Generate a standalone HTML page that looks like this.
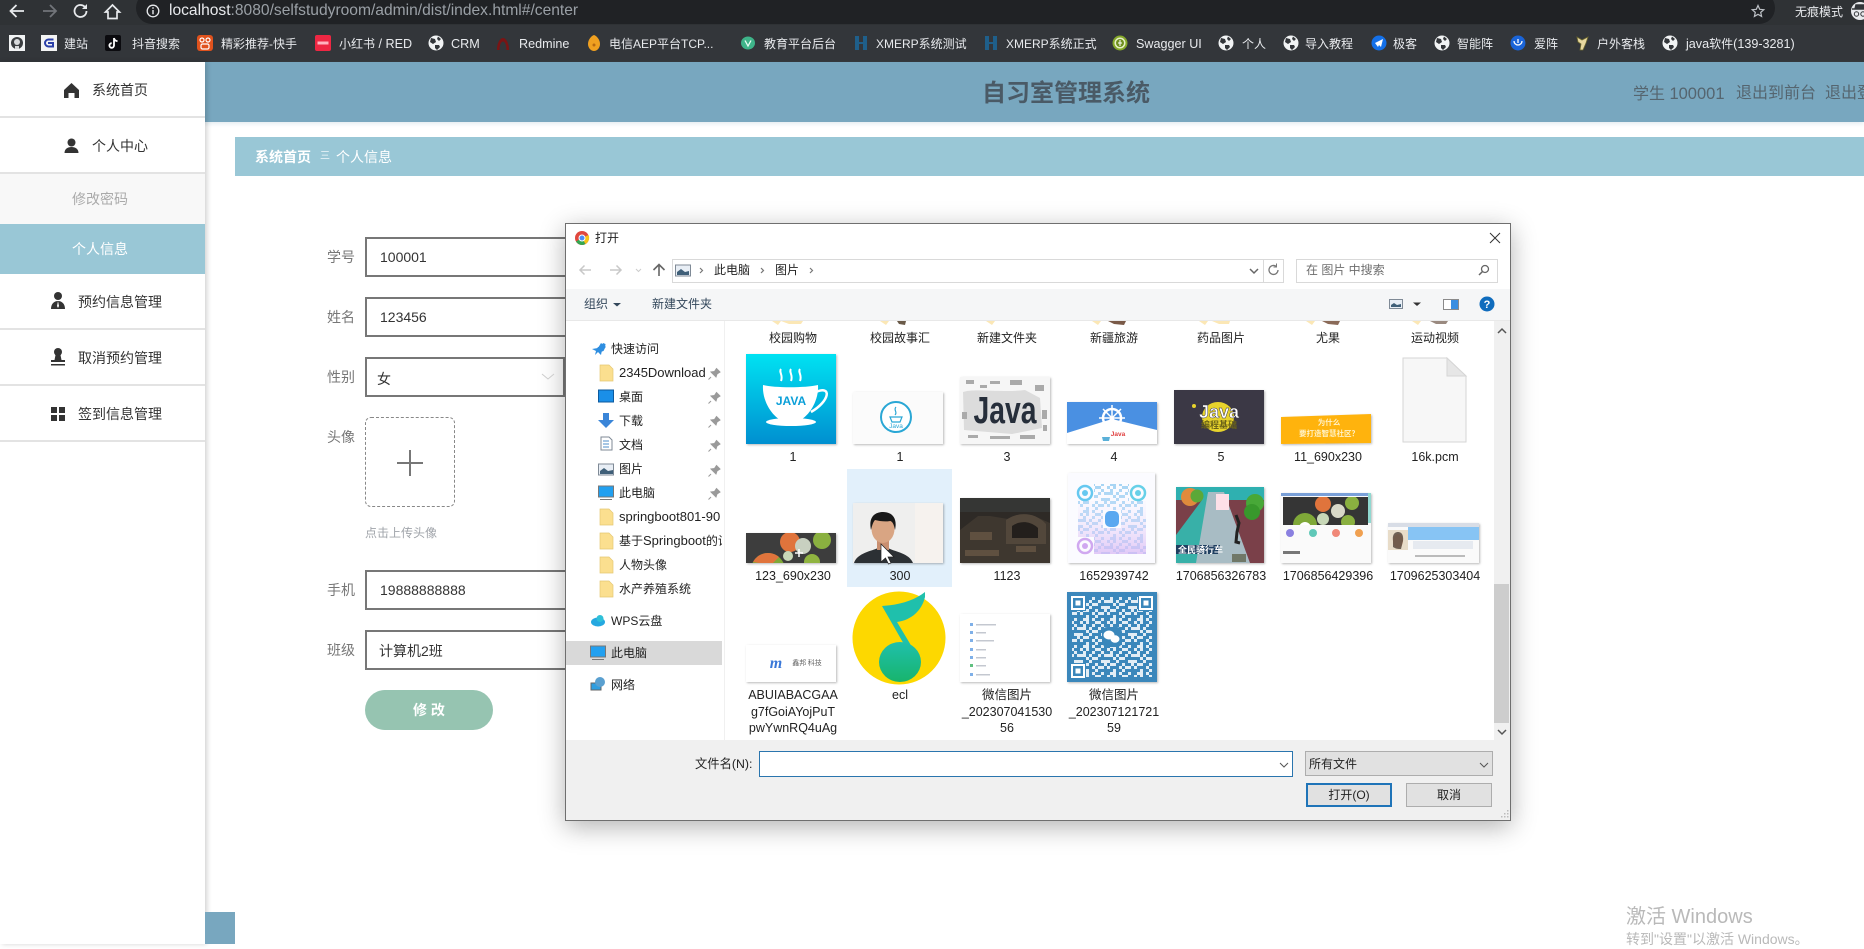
<!DOCTYPE html>
<html lang="zh-CN">
<head>
<meta charset="utf-8">
<title>自习室管理系统</title>
<style>
html,body{margin:0;padding:0;width:1864px;height:944px;overflow:hidden;background:#fff;font-family:"Liberation Sans","Noto Sans CJK SC",sans-serif}
div,span{box-sizing:border-box}
.a{position:absolute}
.t{position:absolute;white-space:nowrap;line-height:20px;height:20px}
.bm{position:absolute;top:34px;font-size:12px;line-height:20px;height:20px;color:#e8eaed;white-space:nowrap}
.bm.en{font-size:12.6px}
.side{left:0;width:205px;background:#fff;border-bottom:2px solid #e3e3e3}
.st{font-size:14px;color:#333}
.lab{font-size:14px;color:#777}
.inp{position:absolute;left:365px;width:220px;height:40px;border:2px solid #777;background:#fff;font-size:14px;color:#333;line-height:36px;padding-left:13px}
.n{position:absolute;left:619px;font-size:12px;color:#222;line-height:18px;height:18px;white-space:nowrap;overflow:hidden;max-width:103px}
.n.en{font-size:13px}
.n.top{left:611px}
.l{position:absolute;width:108px;margin-left:-54px;text-align:center;font-size:12.5px;color:#222;line-height:16.7px;word-break:break-all}
.d{font-size:12px;color:#222}
</style>
</head>
<body>

<!-- browser chrome -->
<div class="a" style="left:0;top:0;width:1864px;height:25px;background:#2f3235"></div>
<div class="a" style="left:136px;top:-8px;width:1639px;height:32px;background:#202225;border-radius:16px"></div>
<div class="a" style="left:0;top:25px;width:1864px;height:37px;background:#33363a"></div>
<div class="t" style="left:169px;top:1px;font-size:15.6px;color:#9aa0a6"><span style="color:#e8eaed">localhost</span>:8080/selfstudyroom/admin/dist/index.html#/center</div>
<div class="t" style="left:1795px;top:2px;font-size:12px;color:#e8eaed">无痕模式</div>

<div class="bm" style="left:64px">建站</div>
<div class="bm" style="left:132px">抖音搜索</div>
<div class="bm" style="left:221px">精彩推荐-快手</div>
<div class="bm en" style="left:339px"><span style="font-size:12px">小红书</span> / RED</div>
<div class="bm en" style="left:451px">CRM</div>
<div class="bm en" style="left:519px">Redmine</div>
<div class="bm" style="left:609px">电信AEP平台TCP...</div>
<div class="bm" style="left:764px">教育平台后台</div>
<div class="bm" style="left:876px">XMERP系统测试</div>
<div class="bm" style="left:1006px">XMERP系统正式</div>
<div class="bm en" style="left:1136px">Swagger UI</div>
<div class="bm" style="left:1242px">个人</div>
<div class="bm" style="left:1305px">导入教程</div>
<div class="bm" style="left:1393px">极客</div>
<div class="bm" style="left:1457px">智能阵</div>
<div class="bm" style="left:1534px">爱阵</div>
<div class="bm" style="left:1597px">户外客栈</div>
<div class="bm en" style="left:1686px">java<span style="font-size:12px">软件</span>(139-3281)</div>

<!-- app header -->
<div class="a" style="left:0;top:62px;width:1864px;height:60px;background:#78a7bf;box-shadow:0 2px 4px rgba(120,167,191,.2)"></div>
<div class="t" style="left:982px;top:82px;font-size:24px;line-height:24px;height:24px;font-weight:700;color:#4a5a66">自习室管理系统</div>
<div class="t" style="left:1633px;top:83px;font-size:16px;line-height:22px;height:22px;color:#55656f">学生 <span style="font-size:16.5px">100001</span></div>
<div class="t" style="left:1736px;top:83px;font-size:16px;line-height:22px;height:22px;color:#55656f">退出到前台</div>
<div class="t" style="left:1825px;top:83px;font-size:16px;line-height:22px;height:22px;color:#55656f">退出登录</div>

<!-- breadcrumb -->
<div class="a" style="left:235px;top:137px;width:1629px;height:39px;background:#99c7d6"></div>
<div class="t" style="left:255px;top:147px;font-size:14px;font-weight:700;color:#fff">系统首页</div>
<div class="t" style="left:320px;top:147px;font-size:10px;color:#eef7fa">三</div>
<div class="t" style="left:336px;top:147px;font-size:14px;color:#fff">个人信息</div>

<!-- sidebar -->
<div class="a" style="left:0;top:62px;width:205px;height:882px;background:#fff;box-shadow:2px 0 5px rgba(0,0,0,.18)"></div>
<div class="a side" style="top:62px;height:56px"></div>
<div class="a side" style="top:118px;height:56px"></div>
<div class="a" style="left:0;top:174px;width:205px;height:50px;background:#f8f8f8"></div>
<div class="a" style="left:0;top:224px;width:205px;height:50px;background:#99c7d6"></div>
<div class="a side" style="top:274px;height:56px"></div>
<div class="a side" style="top:330px;height:56px"></div>
<div class="a side" style="top:386px;height:56px"></div>
<div class="t st" style="left:92px;top:80px">系统首页</div>
<div class="t st" style="left:92px;top:136px">个人中心</div>
<div class="t" style="left:72px;top:189px;font-size:14px;color:#aaa">修改密码</div>
<div class="t" style="left:72px;top:239px;font-size:14px;color:#fff">个人信息</div>
<div class="t st" style="left:78px;top:292px">预约信息管理</div>
<div class="t st" style="left:78px;top:348px">取消预约管理</div>
<div class="t st" style="left:78px;top:404px">签到信息管理</div>

<!-- form -->
<div class="t lab" style="left:327px;top:247px">学号</div>
<div class="t lab" style="left:327px;top:307px">姓名</div>
<div class="t lab" style="left:327px;top:367px">性别</div>
<div class="t lab" style="left:327px;top:427px">头像</div>
<div class="t lab" style="left:327px;top:580px">手机</div>
<div class="t lab" style="left:327px;top:640px">班级</div>
<div class="inp" style="top:237px">100001</div>
<div class="inp" style="top:297px">123456</div>
<div class="inp" style="top:357px;width:200px;padding-left:10px;line-height:40px">女</div>
<div class="a" style="left:365px;top:417px;width:90px;height:90px;border:1px dashed #888;border-radius:6px"></div>
<div class="a" style="left:397px;top:462px;width:26px;height:2px;background:#777"></div>
<div class="a" style="left:409px;top:450px;width:2px;height:26px;background:#777"></div>
<div class="t" style="left:365px;top:523px;font-size:12px;color:#a0a4aa">点击上传头像</div>
<div class="inp" style="top:570px">19888888888</div>
<div class="inp" style="top:630px;padding-left:12px;line-height:38px">计算机2班</div>
<div class="a" style="left:365px;top:690px;width:128px;height:40px;border-radius:20px;background:#96c4b1;color:#fff;font-size:14px;font-weight:700;line-height:40px;text-align:center">修 改</div>
<div class="a" style="left:205px;top:912px;width:30px;height:32px;background:#78a7bf"></div>

<!-- windows watermark -->
<div class="t" style="left:1626px;top:905px;font-size:20px;line-height:24px;height:24px;color:#b9b9b9">激活 Windows</div>
<div class="t" style="left:1626px;top:929px;font-size:14px;color:#b9b9b9">转到"设置"以激活 Windows。</div>

<!-- file dialog -->
<div class="a" style="left:565px;top:223px;width:946px;height:598px;background:#fff;border:1px solid #6f6f6f;box-shadow:0 6px 24px rgba(0,0,0,.3)"></div>
<div class="t d" style="left:595px;top:228px">打开</div>
<div class="a" style="left:672px;top:259px;width:612px;height:24px;border:1px solid #d9d9d9"></div>
<div class="a" style="left:1263px;top:259px;width:1px;height:24px;background:#d9d9d9"></div>
<div class="t d" style="left:714px;top:260px">此电脑</div>
<div class="t d" style="left:775px;top:260px">图片</div>
<div class="a" style="left:1296px;top:259px;width:202px;height:24px;border:1px solid #d9d9d9"></div>
<div class="t" style="left:1306px;top:260px;font-size:12px;color:#6d6d6d">在 图片 中搜索</div>
<div class="a" style="left:566px;top:289px;width:944px;height:32px;background:#f5f6f7;border-bottom:1px solid #e8e8e8"></div>
<div class="t" style="left:584px;top:294px;font-size:12px;color:#33475b">组织</div>
<div class="t" style="left:652px;top:294px;font-size:12px;color:#33475b">新建文件夹</div>

<div class="a" style="left:724px;top:321px;width:1px;height:419px;background:#f0f0f0"></div>
<div class="a" style="left:566px;top:641px;width:156px;height:24px;background:#d9d9d9"></div>
<div class="n top" style="top:340px">快速访问</div>
<div class="n en" style="top:364px">2345Download</div>
<div class="n" style="top:388px">桌面</div>
<div class="n" style="top:412px">下载</div>
<div class="n" style="top:436px">文档</div>
<div class="n" style="top:460px">图片</div>
<div class="n" style="top:484px">此电脑</div>
<div class="n en" style="top:508px">springboot801-90</div>
<div class="n en" style="top:532px"><span style="font-size:12px">基于</span>Springboot<span style="font-size:12px">的设计</span></div>
<div class="n" style="top:556px">人物头像</div>
<div class="n" style="top:580px">水产养殖系统</div>
<div class="n top" style="top:612px">WPS云盘</div>
<div class="n top" style="top:644px">此电脑</div>
<div class="n top" style="top:676px">网络</div>

<div class="a" style="left:847px;top:469px;width:105px;height:118px;background:#e2f0fb"></div>
<div class="a" style="left:1494px;top:321px;width:16px;height:419px;background:#f0f0f0"></div>
<div class="a" style="left:1494px;top:584px;width:15px;height:139px;background:#cdcdcd"></div>

<div class="l" style="left:793px;top:330px;font-size:12px">校园购物</div>
<div class="l" style="left:900px;top:330px;font-size:12px">校园故事汇</div>
<div class="l" style="left:1007px;top:330px;font-size:12px">新建文件夹</div>
<div class="l" style="left:1114px;top:330px;font-size:12px">新疆旅游</div>
<div class="l" style="left:1221px;top:330px;font-size:12px">药品图片</div>
<div class="l" style="left:1328px;top:330px;font-size:12px">尤果</div>
<div class="l" style="left:1435px;top:330px;font-size:12px">运动视频</div>

<div class="l" style="left:793px;top:449px">1</div>
<div class="l" style="left:900px;top:449px">1</div>
<div class="l" style="left:1007px;top:449px">3</div>
<div class="l" style="left:1114px;top:449px">4</div>
<div class="l" style="left:1221px;top:449px">5</div>
<div class="l" style="left:1328px;top:449px">11_690x230</div>
<div class="l" style="left:1435px;top:449px">16k.pcm</div>

<div class="l" style="left:793px;top:568px">123_690x230</div>
<div class="l" style="left:900px;top:568px">300</div>
<div class="l" style="left:1007px;top:568px">1123</div>
<div class="l" style="left:1114px;top:568px">1652939742</div>
<div class="l" style="left:1221px;top:568px">1706856326783</div>
<div class="l" style="left:1328px;top:568px">1706856429396</div>
<div class="l" style="left:1435px;top:568px">1709625303404</div>

<div class="l" style="left:793px;top:687px">ABUIABACGAA<br>g7fGoiAYojPuT<br>pwYwnRQ4uAg</div>
<div class="l" style="left:900px;top:687px">ecl</div>
<div class="l" style="left:1007px;top:687px">微信图片<br>_202307041530<br>56</div>
<div class="l" style="left:1114px;top:687px">微信图片<br>_202307121721<br>59</div>

<div class="a" style="left:566px;top:740px;width:944px;height:80px;background:#f0f0f0"></div>
<div class="t d" style="left:695px;top:754px;font-size:12.3px">文件名(N):</div>
<div class="a" style="left:759px;top:751px;width:534px;height:26px;border:1px solid #2a75ae;outline:1px solid #2a75ae;outline-offset:-1px;background:#fff"></div>
<div class="a" style="left:1305px;top:751px;width:188px;height:25px;background:#e1e1e1;border:1px solid #adadad"></div>
<div class="t d" style="left:1309px;top:754px">所有文件</div>
<div class="a d" style="left:1306px;top:783px;width:86px;height:24px;background:#e1e1e1;border:2px solid #1f74b8;text-align:center;line-height:20px">打开(O)</div>
<div class="a d" style="left:1406px;top:783px;width:86px;height:24px;background:#e1e1e1;border:1px solid #adadad;text-align:center;line-height:22px">取消</div>

<!-- icons & thumbnails -->
<svg class="a" style="left:0;top:0" width="1864" height="944" viewBox="0 0 1864 944">
<defs>
<linearGradient id="jg" x1="0" y1="0" x2="0" y2="1"><stop offset="0" stop-color="#00e2f2"/><stop offset="1" stop-color="#008fd0"/></linearGradient>
<linearGradient id="qg" x1="0" y1="0" x2="0" y2="1"><stop offset="0" stop-color="#1fc0ac"/><stop offset="1" stop-color="#18b46c"/></linearGradient>
<linearGradient id="q2" x1="0" y1="0" x2="0" y2="1"><stop offset="0" stop-color="#fff" stop-opacity="0"/><stop offset="1" stop-color="#d8b8f4" stop-opacity=".75"/></linearGradient>
<clipPath id="c123"><rect x="746" y="533" width="90" height="30"/></clipPath>
<clipPath id="c300"><rect x="853" y="503" width="90" height="60"/></clipPath>
<clipPath id="c396"><rect x="1283" y="497" width="85" height="28"/></clipPath>
<clipPath id="c783"><rect x="1176" y="487" width="88" height="76"/></clipPath>
<pattern id="n1" width="27" height="27" patternUnits="userSpaceOnUse">
<path d="M0 0h3v3H0zM6 0h3v3H6zM15 0h6v3h-6zM3 3h3v3H3zM12 3h3v3h-3zM21 3h3v3h-3zM0 6h6v3H0zM9 6h3v3H9zM18 6h3v3h-3zM24 6h3v3h-3zM6 9h3v3H6zM12 9h6v3h-6zM0 12h3v3H0zM9 12h3v3H9zM21 12h6v3h-6zM3 15h6v3H3zM15 15h3v3h-3zM24 15h3v3h-3zM0 18h3v3H0zM12 18h3v3h-3zM18 18h6v3h-6zM6 21h3v3H6zM15 21h3v3h-3zM3 24h6v3H3zM12 24h3v3h-3zM21 24h3v3h-3z" fill="#fff"/>
</pattern>
<pattern id="n2" width="27" height="27" patternUnits="userSpaceOnUse">
<path d="M0 0h3v3H0zM6 0h3v3H6zM15 0h6v3h-6zM3 3h3v3H3zM12 3h3v3h-3zM21 3h3v3h-3zM0 6h6v3H0zM9 6h3v3H9zM18 6h3v3h-3zM24 6h3v3h-3zM6 9h3v3H6zM12 9h6v3h-6zM0 12h3v3H0zM9 12h3v3H9zM21 12h6v3h-6zM3 15h6v3H3zM15 15h3v3h-3zM24 15h3v3h-3zM0 18h3v3H0zM12 18h3v3h-3zM18 18h6v3h-6zM6 21h3v3H6zM15 21h3v3h-3zM3 24h6v3H3zM12 24h3v3h-3zM21 24h3v3h-3z" fill="#a6d4f4"/>
</pattern>
<g id="globe"><circle cx="8" cy="8" r="7.500" fill="#f1f3f4"/><path d="M3 3l4 1 1 3-3 2-3-2zM10 1.500l3 2.500-2 2-2-2zM7 10l4 0 1 2-3 3-2-2z" fill="#33363a"/></g>
<g id="pin"><path d="M3 10L0.500 12.500M3 5l5 5 1-3 3-2-3.500-3.500-2 3z" fill="#9a9a9a" stroke="#9a9a9a" stroke-width="1"/></g>
<g id="fold"><path d="M0 0h9l4 4v12H0z" fill="#fbdf8f" stroke="#e5c873" stroke-width=".7"/></g>
<filter id="sh" x="-5%" y="-5%" width="110%" height="115%"><feDropShadow dx="1" dy="1" stdDeviation="1" flood-color="#000" flood-opacity=".28"/></filter>
</defs>

<!-- browser nav -->
<path d="M24 11H11M16.500 5L10.500 11l6 6" fill="none" stroke="#e8eaed" stroke-width="1.800"/>
<path d="M43 11h13M50 5l6 6-6 6" fill="none" stroke="#72757a" stroke-width="1.800"/>
<path d="M86.500 11a6 6 0 1 1-1.800-4.300" fill="none" stroke="#e8eaed" stroke-width="1.800"/><path d="M87 4v5h-5z" fill="#e8eaed"/>
<path d="M112.500 5L105.500 12h2.500v6.500h9V12h2.500z" fill="none" stroke="#e8eaed" stroke-width="1.700"/>
<circle cx="153" cy="11" r="5.800" fill="none" stroke="#e8eaed" stroke-width="1.300"/><path d="M153 10v4.200M153 7.200v1.500" stroke="#e8eaed" stroke-width="1.400"/>
<path d="M1758 5.500l1.700 3.800 4.100.4-3.100 2.700.9 4-3.600-2.100-3.600 2.100.9-4-3.100-2.700 4.100-.4z" fill="none" stroke="#bdc1c6" stroke-width="1.200"/>
<circle cx="1860" cy="11" r="9" fill="#e8eaed"/><path d="M1852 9h16M1855 9l1-4h8l1 4" stroke="#33363a" stroke-width="1.500" fill="#33363a"/><circle cx="1856.500" cy="14" r="2.200" fill="none" stroke="#33363a"/><circle cx="1863" cy="14" r="2.200" fill="none" stroke="#33363a"/>

<!-- bookmarks -->
<rect x="9" y="35" width="16" height="16" fill="#f1f3f4"/><circle cx="17" cy="43" r="6" fill="#3a3d40"/><circle cx="17" cy="42" r="3" fill="#d8dadc"/><path d="M15 49h4v-3h-4z" fill="#d8dadc"/>
<rect x="41" y="35" width="16" height="16" fill="#f4f4f4"/><path d="M53.500 39.500h-5a3.500 3.500 0 0 0 0 7h4.500v-3.500h-5" fill="none" stroke="#2b3fa8" stroke-width="2"/>
<rect x="105" y="35" width="16" height="16" rx="2" fill="#0b0b0f"/><path d="M114 38v7.500a2.300 2.300 0 1 1-2.300-2.300M114 38c.4 2 1.800 3 3.500 3.200" fill="none" stroke="#fff" stroke-width="1.800"/>
<rect x="197" y="35" width="16" height="16" rx="3" fill="#e0521d"/><circle cx="202" cy="40" r="2" fill="none" stroke="#fff" stroke-width="1.200"/><circle cx="208" cy="40" r="2" fill="none" stroke="#fff" stroke-width="1.200"/><rect x="201" y="44" width="8" height="5" rx="1.500" fill="none" stroke="#fff" stroke-width="1.200"/>
<rect x="315" y="35" width="16" height="16" rx="2" fill="#ee2743"/><rect x="317.500" y="41.500" width="11" height="3" fill="#ffb3bf"/>
<use href="#globe" x="428" y="35"/>
<path d="M497 50c0-7 3-12 6-12s6 5 6 12h-2.500c0-5-1.500-8.500-3.500-8.500S499.500 45 499.500 50z" fill="#7a1414"/>
<path d="M588 44c0-4 3-8 6-9 3 1 6 5 6 9s-3 7-6 7-6-3-6-7z" fill="#f0a020"/><circle cx="594" cy="45" r="1.500" fill="#b86a10"/>
<ellipse cx="748" cy="43" rx="7" ry="6.500" fill="#3eb489"/><path d="M745 40.500l3 5.500 3-5.500" stroke="#e8fff4" stroke-width="1.300" fill="none"/>
<path d="M855 36h4v14h-4zM863 36h4v14h-4zM859 42h4v2h-4z" fill="#1f5f8a"/>
<path d="M985 36h4v14h-4zM993 36h4v14h-4zM989 42h4v2h-4z" fill="#1f5f8a"/>
<circle cx="1120" cy="43" r="7.500" fill="#85a82a"/><circle cx="1120" cy="43" r="5.500" fill="#e8f0c8"/><circle cx="1120" cy="43" r="4" fill="#6f8f1f"/><path d="M1120 40v6M1118 43h4" stroke="#fff"/>
<use href="#globe" x="1218" y="35"/><use href="#globe" x="1283" y="35"/>
<circle cx="1379" cy="43" r="7.500" fill="#1470e8"/><path d="M1375 43l8-4-2 8-2-2-1 2z" fill="#fff"/>
<use href="#globe" x="1434" y="35"/>
<circle cx="1518" cy="43" r="7.500" fill="#1a64d8"/><path d="M1514 41a4 4 0 0 0 8 0M1518 39v4" fill="none" stroke="#fff" stroke-width="1.300"/>
<path d="M1577 37l5 3 6-3-2 6-3 7-3 0 1-6-3-2z" fill="#e8d8a0" stroke="#6f6a30" stroke-width=".8"/>
<use href="#globe" x="1662" y="35"/>

<!-- sidebar icons -->
<path d="M71.500 83L64 90v8h4.500v-5h6v5H79v-8z" fill="#333"/>
<circle cx="71.500" cy="142.500" r="4" fill="#333"/><path d="M64.500 153c0-4 3-6 7-6s7 2 7 6z" fill="#333"/>
<circle cx="58" cy="296" r="4" fill="#333"/><path d="M51 309c0-5 3-8 7-8s7 3 7 8z" fill="#333"/><path d="M58 301l-1 5 1 2 1-2z" fill="#fff"/>
<circle cx="58" cy="352" r="4" fill="#333"/><path d="M55.500 355h5l1 5H65v2H51v-2h3.500z" fill="#333"/><rect x="51" y="364" width="14" height="1.500" fill="#333"/>
<path d="M51 407h6v6h-6zM59 407h6v6h-6zM51 415h6v6h-6zM59 415h6v6h-6z" fill="#333"/>
<path d="M542 374l6 5 6-5" fill="none" stroke="#ccc" stroke-width="1"/>

<!-- dialog header -->
<circle cx="582" cy="238" r="7" fill="#e0483e"/><path d="M582 238L576 241.500A7 7 0 0 0 585.500 244z" fill="#33a852"/><path d="M582 238l3.500 6A7 7 0 0 0 588.500 235z" fill="#f5c518"/><circle cx="582" cy="238" r="3" fill="#4d8cf5" stroke="#fff"/>
<path d="M1490 233l10 10M1500 233l-10 10" stroke="#333" stroke-width="1"/>
<path d="M591 270H580M584.500 265.500L580 270l4.500 4.500" fill="none" stroke="#c8c8c8" stroke-width="1.500"/>
<path d="M610 270h11M616.500 265.500L621 270l-4.500 4.500" fill="none" stroke="#c8c8c8" stroke-width="1.500"/>
<path d="M636 269l2.500 2.500 2.500-2.500" fill="none" stroke="#ccc"/>
<path d="M659 276v-11.500M653.500 270l5.500-5.500 5.500 5.500" fill="none" stroke="#666" stroke-width="1.600"/>
<rect x="675.500" y="265" width="15" height="11" fill="#e8eef5" stroke="#7f8a96"/><path d="M677 272l4-3 4 3 4-1v4h-12z" fill="#3f5f78"/>
<path d="M700 268l2.500 2.500-2.500 2.500M761 268l2.500 2.500-2.500 2.500M810 268l2.500 2.500-2.500 2.500" fill="none" stroke="#777" stroke-width="1.200"/>
<path d="M1250 269l4 4 4-4" fill="none" stroke="#666" stroke-width="1.500"/>
<path d="M1278 270a4.500 4.500 0 1 1-2-3.800" fill="none" stroke="#777" stroke-width="1.300"/><path d="M1276.500 263.500v3.500h-3" fill="none" stroke="#777"/>
<circle cx="1485" cy="269" r="3.500" fill="none" stroke="#666" stroke-width="1.300"/><path d="M1482.500 271.500l-3.500 3.500" stroke="#666" stroke-width="1.500"/>
<path d="M613 303h8l-4 3.500z" fill="#33475b"/>
<rect x="1389.500" y="299.500" width="13" height="9" fill="#e8eef5" stroke="#7f8a96"/><path d="M1391 305l3-2 3 2 4-1v3h-10z" fill="#3f5f78"/>
<path d="M1413 302.500h8l-4 3.500z" fill="#333"/>
<rect x="1443.500" y="299.500" width="15" height="10" fill="#fff" stroke="#8a8a8a"/><rect x="1451" y="300" width="7" height="9" fill="#3a8ee0"/>
<circle cx="1487" cy="304" r="7.500" fill="#0f6cbd"/><text x="1487" y="308" text-anchor="middle" font-size="11" font-weight="700" fill="#fff" font-family="Liberation Sans">?</text>

<!-- nav pane icons -->
<path d="M604 343l2.500 1 -.5 4-1.500 3-3 1-.5 2-1-3-3-1 2-3 3-.5z" fill="#2e8ee0" transform="translate(-1,0)"/><path d="M592 349l6-1 3-5 5 4-4 3-1 5-3-3-3 3 1-4z" fill="#2e8ee0"/>
<use href="#fold" x="600" y="365"/>
<rect x="598.500" y="390" width="15" height="12" fill="#1a8fe8" stroke="#0c5a9e"/>
<path d="M603 413h6v7h5l-8 8-8-8h5z" fill="#3a85d8"/>
<path d="M601 437h8l3 3v10h-11z" fill="#fff" stroke="#7f8a96"/><path d="M603 441h6M603 444h6M603 447h6" stroke="#4d8cc8"/>
<rect x="598.500" y="464" width="15" height="11" fill="#e8eef5" stroke="#7f8a96"/><path d="M600 471l4-3 4 3 5-1v4h-13z" fill="#3f5f78"/>
<rect x="598.500" y="486" width="15" height="11" fill="#22a0f0" stroke="#777"/><path d="M600 499.500h12" stroke="#777"/>
<use href="#fold" x="600" y="509"/><use href="#fold" x="600" y="533"/><use href="#fold" x="600" y="557"/><use href="#fold" x="600" y="581"/>
<ellipse cx="598" cy="622" rx="7" ry="4.500" fill="#25a8e0"/><circle cx="600" cy="618.500" r="3.500" fill="#2fc0d8"/>
<rect x="590.500" y="646" width="15" height="11" fill="#22a0f0" stroke="#777"/><path d="M592 659.500h12" stroke="#777"/>
<rect x="591" y="683" width="10" height="7" fill="#2f9ee0" stroke="#666"/><circle cx="600" cy="682" r="5" fill="#5aa0d0"/>
<use href="#pin" x="708" y="367"/><use href="#pin" x="708" y="391"/><use href="#pin" x="708" y="415"/><use href="#pin" x="708" y="439"/><use href="#pin" x="708" y="464"/><use href="#pin" x="708" y="487"/>

<!-- row 0 stubs -->
<path d="M772 321l6 4 3-4zM781 321h22l-2 3-12 0z" fill="#fbe7b5"/>
<path d="M880 321l6 4 3-4z" fill="#fbe7b5"/><path d="M897 321h9l-1 4-6-1z" fill="#6a5a48"/>
<path d="M986 321l6 4 3-4z" fill="#fbe7b5"/>
<path d="M1092 321l6 4 3-4z" fill="#fbe7b5"/><path d="M1108 321h18l-2 4-10-1z" fill="#7a5a48"/>
<path d="M1199 321l6 4 3-4zM1212 321h18l-1 3-10 0z" fill="#fbe7b5"/>
<path d="M1306 321l6 4 3-4z" fill="#fbe7b5"/><path d="M1322 321h18l-2 4-10-1z" fill="#8a6a58"/>
<path d="M1412 321l6 4 3-4z" fill="#fbe7b5"/><path d="M1430 321h18l-2 3-10 0z" fill="#9a8a80"/>

<!-- row 1 -->
<g filter="url(#sh)"><rect x="746" y="354" width="90" height="90" fill="url(#jg)"/></g>
<path d="M763 385C775 388 805 388 818 385C819 400 810 414 802 419H779C771 414 762 400 763 385z" fill="#fff"/>
<path d="M816 392C832 385 830 401 811 412" fill="none" stroke="#fff" stroke-width="2.500"/>
<ellipse cx="791" cy="422" rx="25" ry="4" fill="#fff"/>
<path d="M781 369c-2.500 3 2.500 6 0 12M791 369c-2.500 3 2.500 6 0 12M800 369c-2.500 3 2.500 6 0 12" fill="none" stroke="#fff" stroke-width="2"/>
<text x="791" y="405" text-anchor="middle" font-size="12" font-weight="700" fill="#0a9fd8" font-family="Liberation Sans">JAVA</text>

<g filter="url(#sh)"><rect x="853" y="392" width="90" height="52" fill="#fbfbfb"/></g>
<circle cx="896" cy="417" r="15" fill="#fff" stroke="#2aa7d5" stroke-width="2"/><path d="M896 407c-3 3 2 5-1 8M890 417h12l-2 5h-8z" fill="none" stroke="#2aa7d5" stroke-width="1.200"/>
<text x="896" y="428" text-anchor="middle" font-size="6.500" fill="#2aa7d5" font-family="Liberation Sans">Java</text>

<g filter="url(#sh)"><rect x="960" y="377" width="90" height="67" fill="#f6f6f6"/></g>
<path d="M963 392c12-4 40 1 62-2l15 8 2 30-30 6-48-4z" fill="#dcdcdc"/>
<path d="M966 380h8v4h-8zM980 385h7v3h-7zM990 381h10v3h-10zM1010 380h12v5h-12zM1035 385h9v6h-9zM968 435h10v3h-10zM990 436h20v3h-20zM1020 435h15v4h-15zM1042 410h5v9h-5zM962 412h5v7h-5zM1043 425h4v6h-4z" fill="#aaa"/>
<text x="1005" y="423" text-anchor="middle" font-size="38" font-weight="700" fill="#262e3a" textLength="63" lengthAdjust="spacingAndGlyphs" font-family="Liberation Sans">Java</text>

<g filter="url(#sh)"><rect x="1067" y="402" width="90" height="42" fill="#fff"/></g>
<path d="M1067 402h90v28l-45-11-45 14z" fill="#4a90e2"/>
<circle cx="1112" cy="418" r="9" fill="none" stroke="#fff" stroke-width="2.500"/><path d="M1112 405v22M1099 418h26M1103 409l18 18M1121 409l-18 18" stroke="#fff" stroke-width="1.500"/>
<text x="1118" y="436" text-anchor="middle" font-size="6.500" font-weight="700" fill="#e04040" font-family="Liberation Sans">Java</text>
<path d="M1102 437h8l-1 4h-6z" fill="#5ab0d8"/>

<g filter="url(#sh)"><rect x="1174" y="390" width="90" height="54" fill="#3a3844"/></g>
<ellipse cx="1218" cy="417" rx="16" ry="15" fill="#e7d32c"/>
<text x="1219" y="418" text-anchor="middle" font-size="18" font-weight="700" fill="#fff" stroke="#3a3844" stroke-width=".5" font-family="Liberation Sans">Java</text>
<text x="1219" y="428" text-anchor="middle" font-size="9" font-weight="700" fill="#6a6218" font-family="Noto Sans CJK SC">编程基础</text>
<circle cx="1194" cy="406" r="2" fill="#e7d32c"/>

<g filter="url(#sh)"><path d="M1281 417l90-3v29l-90 1z" fill="#ffb30f"/></g>
<text x="1329" y="425" text-anchor="middle" font-size="7.500" font-weight="700" fill="#fff2c8" font-family="Noto Sans CJK SC">为什么</text>
<text x="1329" y="436" text-anchor="middle" font-size="7.500" font-weight="700" fill="#fff2c8" font-family="Noto Sans CJK SC">要打造智慧社区？</text>

<path d="M1403 358h44l19 18v66h-63z" fill="#f7f7f7" stroke="#d6d6d6"/><path d="M1447 358v18h19z" fill="#e6e6e6" stroke="#d6d6d6"/>

<!-- row 2 -->
<g filter="url(#sh)"><rect x="746" y="533" width="90" height="30" fill="#3c3c3c"/></g>
<g clip-path="url(#c123)">
<circle cx="790" cy="542" r="10" fill="#e0743c"/><circle cx="803" cy="546" r="8" fill="#c8d0c0"/><circle cx="822" cy="540" r="9" fill="#8ab040"/><circle cx="768" cy="570" r="17" fill="#7fa838"/><path d="M753 562a17 17 0 0 1 26-5l-8 8z" fill="#e0743c"/><circle cx="768" cy="572" r="9" fill="#eee"/><circle cx="788" cy="556" r="5" fill="#c8d8b8"/><circle cx="812" cy="562" r="8" fill="#90b440"/><path d="M799 549v8M795 553h8" stroke="#fff" stroke-width="1.500"/>
</g>

<g filter="url(#sh)"><rect x="853" y="503" width="90" height="60" fill="#efefee"/></g>
<rect x="915" y="503" width="28" height="60" fill="#f6f2ee"/>
<g clip-path="url(#c300)">
<path d="M854 563c3-10 18-12 24-15h10c7 4 21 5 25 15z" fill="#2c3034"/>
<rect x="877" y="537" width="12" height="13" fill="#c98f70"/>
<ellipse cx="883" cy="529" rx="11.500" ry="14" fill="#d9a583"/>
<path d="M871 530c-3-14 5-18 12-18s15 4 12 18c-1-6-3-9-5-9-5 1-11 0-15-1-2 2-3 6-4 10z" fill="#191919"/>
</g>
<path d="M881 544v18l4.500-4 3 6 2.500-1-3-6h6z" fill="#fff" stroke="#222" stroke-width=".7"/>

<g filter="url(#sh)"><rect x="960" y="498" width="90" height="65" fill="#2e2b27"/></g>
<path d="M960 530l18-14h12l18 3 24-4 18 8v40h-90z" fill="#3e372f"/>
<path d="M1006 520a30 30 0 0 1 40 4v20h-40z" fill="#52473b"/><path d="M1012 526a20 20 0 0 1 26 2v10h-26z" fill="#231f1c"/>
<path d="M970 532h22v8h-22zM1016 546h20v6h-20zM965 550h34v6h-34z" fill="#5f5040"/>
<rect x="960" y="498" width="90" height="14" fill="#353634"/>

<g filter="url(#sh)"><rect x="1068" y="473" width="87" height="90" fill="#fbfbff"/></g>
<rect x="1078" y="484" width="68" height="70" fill="url(#n2)"/>
<rect x="1078" y="484" width="68" height="70" fill="url(#q2)"/>
<rect x="1076" y="483" width="18" height="18" fill="#fbfbff"/><rect x="1129" y="483" width="18" height="18" fill="#fbfbff"/><rect x="1076" y="537" width="18" height="18" fill="#fbfbff"/>
<g fill="none" stroke-width="2.500"><circle cx="1085" cy="493" r="7" stroke="#66c8f0"/><circle cx="1138" cy="493" r="7" stroke="#66d0e8"/><circle cx="1085" cy="546" r="7" stroke="#d0a8f0"/></g>
<circle cx="1085" cy="493" r="3" fill="#66c8f0"/><circle cx="1138" cy="493" r="3" fill="#66d0e8"/><circle cx="1085" cy="546" r="3" fill="#d0a8f0"/>
<rect x="1103" y="510" width="18" height="18" fill="#fbfbff"/><rect x="1105" y="511" width="14" height="16" rx="5" fill="#5aa8f0"/>

<g filter="url(#sh)"><rect x="1176" y="487" width="88" height="76" fill="#7a3f48"/></g>
<g clip-path="url(#c783)">
<rect x="1176" y="487" width="88" height="13" fill="#2fb0b0"/>
<path d="M1208 492h16l26 71h-58z" fill="#a8bcc4"/><path d="M1176 535l32-43-12 71h-20z" fill="#38b0a8"/>
<circle cx="1190" cy="497" r="9" fill="#e08a3c"/><circle cx="1197" cy="496" r="6.500" fill="#5ca838"/><circle cx="1255" cy="503" r="9" fill="#48a838"/><circle cx="1252" cy="512" r="8" fill="#38982c"/>
<rect x="1216" y="494" width="13" height="16" fill="#fde0e8"/><path d="M1236 515l3 8-2 9-1 10 4 1" stroke="#222" stroke-width="3" fill="none"/>
<rect x="1232" y="554" width="14" height="8" fill="#707868"/>
<rect x="1176" y="545" width="44" height="9" fill="#1f3f60"/>
<text x="1178" y="553" font-size="9" font-weight="700" fill="#fff" font-family="Noto Sans CJK SC">全民骑行车</text>
</g>

<g filter="url(#sh)"><rect x="1281" y="493" width="90" height="70" fill="#fafafa"/></g>
<rect x="1281" y="493" width="90" height="3" fill="#7aa0d8"/><rect x="1368" y="493" width="3" height="30" fill="#90d8d0"/><rect x="1283" y="497" width="85" height="28" fill="#353535"/>
<g clip-path="url(#c396)"><circle cx="1323" cy="504" r="8" fill="#e0743c"/><circle cx="1338" cy="511" r="7" fill="#d8d8c8"/><circle cx="1352" cy="503" r="7" fill="#8ab040"/><circle cx="1305" cy="525" r="12" fill="#7fa838"/><circle cx="1305" cy="528" r="6" fill="#fff"/><circle cx="1323" cy="519" r="6" fill="#c8d8b8"/><circle cx="1348" cy="522" r="7" fill="#8ab040"/></g>
<circle cx="1290" cy="533" r="4" fill="#8a80e0"/><circle cx="1313" cy="533" r="4" fill="#60c8b8"/><circle cx="1336" cy="533" r="4" fill="#f08878"/><circle cx="1359" cy="533" r="4" fill="#f0a050"/>
<rect x="1283" y="551" width="17" height="3" fill="#777"/>

<g filter="url(#sh)"><rect x="1388" y="523" width="91" height="40" fill="#fafafa"/></g>
<rect x="1388" y="523" width="91" height="4" fill="#d8dde6"/><rect x="1408" y="527" width="71" height="13" fill="#87c4f4"/>
<rect x="1388" y="530" width="20" height="20" fill="#e8dcc8"/><ellipse cx="1398" cy="541" rx="5" ry="7" fill="#f0c8a8"/><path d="M1393 541c-1-8 3-9 5-9s6 1 5 9l-2 8c-3 0-5 0-8-2z" fill="#3c2c24" opacity=".7"/>
<rect x="1413" y="541" width="60" height="8" fill="#e6eaf0"/><rect x="1415" y="555" width="50" height="2" fill="#bbb"/>

<!-- row 3 -->
<g filter="url(#sh)"><rect x="746" y="645" width="90" height="37" fill="#fff"/></g>
<text x="776" y="668" text-anchor="middle" font-size="16" font-style="italic" font-weight="700" fill="#3a78d8" font-family="Liberation Serif">m</text>
<text x="807" y="665" text-anchor="middle" font-size="7" fill="#666" font-family="Noto Sans CJK SC">鑫邦 科技</text>

<circle cx="899" cy="638" r="46.500" fill="#fdd800"/>
<path d="M882 606C900 605 915 600 925 592L925 597C922 610 912 620 897 622L921 662L905 646z" fill="#1fc0ac"/>
<ellipse cx="900" cy="662" rx="21" ry="20" fill="url(#qg)"/>

<g filter="url(#sh)"><rect x="960" y="614" width="90" height="68" fill="#fff"/></g>
<g fill="#7fb0e8"><rect x="970" y="623" width="3" height="3"/><rect x="970" y="631" width="3" height="3"/><rect x="970" y="639" width="3" height="3"/><rect x="970" y="648" width="3" height="3"/><rect x="970" y="656" width="3" height="3"/><rect x="970" y="664" width="3" height="3" fill="#60c080"/><rect x="970" y="673" width="3" height="3"/></g>
<g fill="#c4c8d0"><rect x="976" y="624" width="20" height="1.500"/><rect x="976" y="632" width="10" height="1.500"/><rect x="976" y="640" width="18" height="1.500"/><rect x="976" y="649" width="10" height="1.500"/><rect x="976" y="657" width="10" height="1.500"/><rect x="976" y="665" width="10" height="1.500"/><rect x="976" y="674" width="14" height="1.500"/></g>

<g filter="url(#sh)"><rect x="1067" y="592" width="90" height="90" fill="#3a87bb"/></g>
<rect x="1072" y="597" width="80" height="80" fill="url(#n1)" opacity=".85"/>
<g fill="#3a87bb"><rect x="1070" y="595" width="16" height="16"/><rect x="1138" y="595" width="16" height="16"/><rect x="1070" y="663" width="16" height="16"/></g>
<g fill="none" stroke="#fff" stroke-width="2"><rect x="1072" y="597" width="12" height="12"/><rect x="1140" y="597" width="12" height="12"/><rect x="1072" y="665" width="12" height="12"/></g>
<g fill="#fff"><rect x="1075.500" y="600.500" width="5" height="5"/><rect x="1143.500" y="600.500" width="5" height="5"/><rect x="1075.500" y="668.500" width="5" height="5"/></g>
<rect x="1102" y="627" width="20" height="20" rx="5" fill="#3a87bb"/><ellipse cx="1109" cy="635" rx="5.500" ry="4.500" fill="#fff"/><ellipse cx="1115" cy="639" rx="4.500" ry="3.700" fill="#fff"/>

<!-- scrollbar arrows, bottom -->
<path d="M1498 333l4-4 4 4" fill="none" stroke="#555" stroke-width="1.500"/>
<path d="M1498 730l4 4 4-4" fill="none" stroke="#555" stroke-width="1.500"/>
<path d="M1280 763l4 4 4-4M1480 763l4 4 4-4" fill="none" stroke="#555" stroke-width="1"/>
<path d="M1507 810h1.500v1.500h-1.500zM1504 813h1.500v1.500h-1.500zM1507 813h1.500v1.500h-1.500zM1501 816h1.500v1.500h-1.500zM1504 816h1.500v1.500h-1.500zM1507 816h1.500v1.500h-1.500z" fill="#bbb"/>
</svg>
</body>
</html>
